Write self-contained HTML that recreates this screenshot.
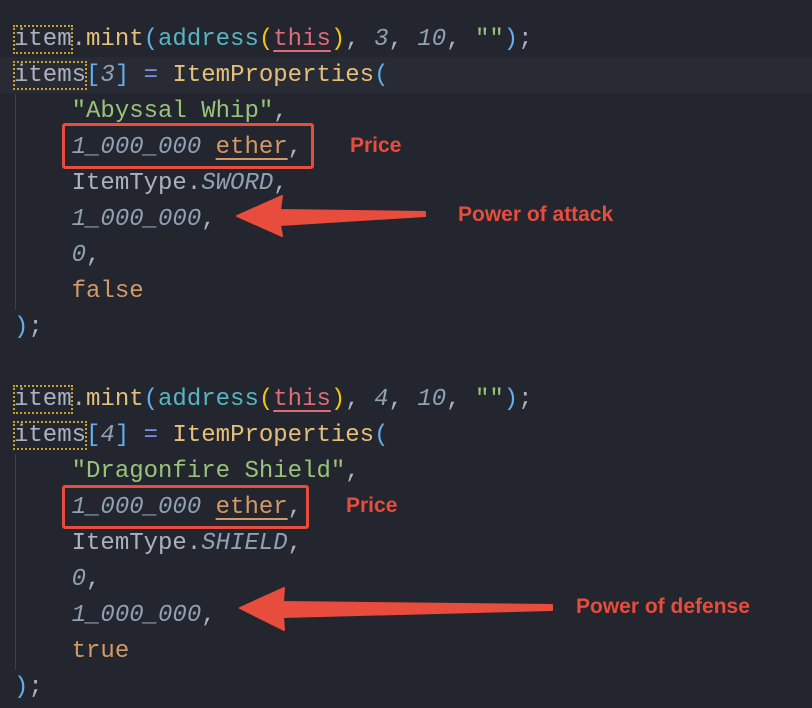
<!DOCTYPE html>
<html><head><meta charset="utf-8"><style>
html,body{margin:0;padding:0}
body{width:812px;height:708px;background:#23262e;position:relative;overflow:hidden;font-family:"Liberation Mono",monospace;font-size:24px;color:#abb2bf}
.l{position:absolute;left:14px;height:36px;line-height:36px;white-space:pre}
.y{color:#e5c07b}.c{color:#56b6c2}.r{color:#e06c75;text-decoration:underline;text-underline-offset:5px}
.n{color:#8fa1b3;font-style:italic}.s{color:#98c379}.o{color:#d19a66}.ou{color:#d19a66;text-decoration:underline;text-underline-offset:5px}
.b{color:#61afef}.p{color:#f1c40f}.e{color:#7c8fe0}
.dot{outline:2px dotted #c9a227;outline-offset:-1px}
.guide{position:absolute;left:15px;width:1px;background:#3b3f48}
.box{position:absolute;border:3px solid #e74c3c;border-radius:3px}
.ann{position:absolute;color:#e74c3c;font-family:"Liberation Sans",sans-serif;font-weight:bold;font-size:21px}
</style></head><body>
<div style="position:absolute;left:0;top:57px;width:812px;height:36px;background:#282b33"></div>
<div class="guide" style="top:94px;height:216px"></div>
<div class="guide" style="top:454px;height:216px"></div>

<div class="l" style="top:22px"><span class="dot">item</span>.<span class="y">mint</span><span class="b">(</span><span class="c">address</span><span class="p">(</span><span class="r">this</span><span class="p">)</span>, <span class="n">3</span>, <span class="n">10</span>, <span class="s">""</span><span class="b">)</span>;</div>
<div class="l" style="top:58px"><span class="dot">items</span><span class="b">[</span><span class="n">3</span><span class="b">]</span> <span class="e">=</span> <span class="y">ItemProperties</span><span class="b">(</span></div>
<div class="l" style="top:94px">    <span class="s">"Abyssal Whip"</span>,</div>
<div class="l" style="top:130px">    <span class="n">1_000_000</span> <span class="ou">ether</span>,</div>
<div class="l" style="top:166px">    ItemType.<span class="n">SWORD</span>,</div>
<div class="l" style="top:202px">    <span class="n">1_000_000</span>,</div>
<div class="l" style="top:238px">    <span class="n">0</span>,</div>
<div class="l" style="top:274px">    <span class="o">false</span></div>
<div class="l" style="top:310px"><span class="b">)</span>;</div>

<div class="l" style="top:382px"><span class="dot">item</span>.<span class="y">mint</span><span class="b">(</span><span class="c">address</span><span class="p">(</span><span class="r">this</span><span class="p">)</span>, <span class="n">4</span>, <span class="n">10</span>, <span class="s">""</span><span class="b">)</span>;</div>
<div class="l" style="top:418px"><span class="dot">items</span><span class="b">[</span><span class="n">4</span><span class="b">]</span> <span class="e">=</span> <span class="y">ItemProperties</span><span class="b">(</span></div>
<div class="l" style="top:454px">    <span class="s">"Dragonfire Shield"</span>,</div>
<div class="l" style="top:490px">    <span class="n">1_000_000</span> <span class="ou">ether</span>,</div>
<div class="l" style="top:526px">    ItemType.<span class="n">SHIELD</span>,</div>
<div class="l" style="top:562px">    <span class="n">0</span>,</div>
<div class="l" style="top:598px">    <span class="n">1_000_000</span>,</div>
<div class="l" style="top:634px">    <span class="o">true</span></div>
<div class="l" style="top:670px"><span class="b">)</span>;</div>

<div class="box" style="left:62px;top:123px;width:246px;height:40px"></div>
<div class="box" style="left:62px;top:485px;width:241px;height:38px"></div>
<div class="ann" style="left:350px;top:134px">Price</div>
<div class="ann" style="left:346px;top:494px">Price</div>
<div class="ann" style="left:458px;top:203px">Power of attack</div>
<div class="ann" style="left:576px;top:595px">Power of defense</div>
<svg style="position:absolute;left:0;top:0" width="812" height="708">
<polygon points="237,216 282,196 280,210 425,212 425,216 280,225 282,236" fill="#e74c3c" stroke="#e74c3c" stroke-width="2" stroke-linejoin="round"/>
<polygon points="240,608 284,588 283,602 552,605 552,610 283,617 284,630" fill="#e74c3c" stroke="#e74c3c" stroke-width="2" stroke-linejoin="round"/>
</svg>
</body></html>
